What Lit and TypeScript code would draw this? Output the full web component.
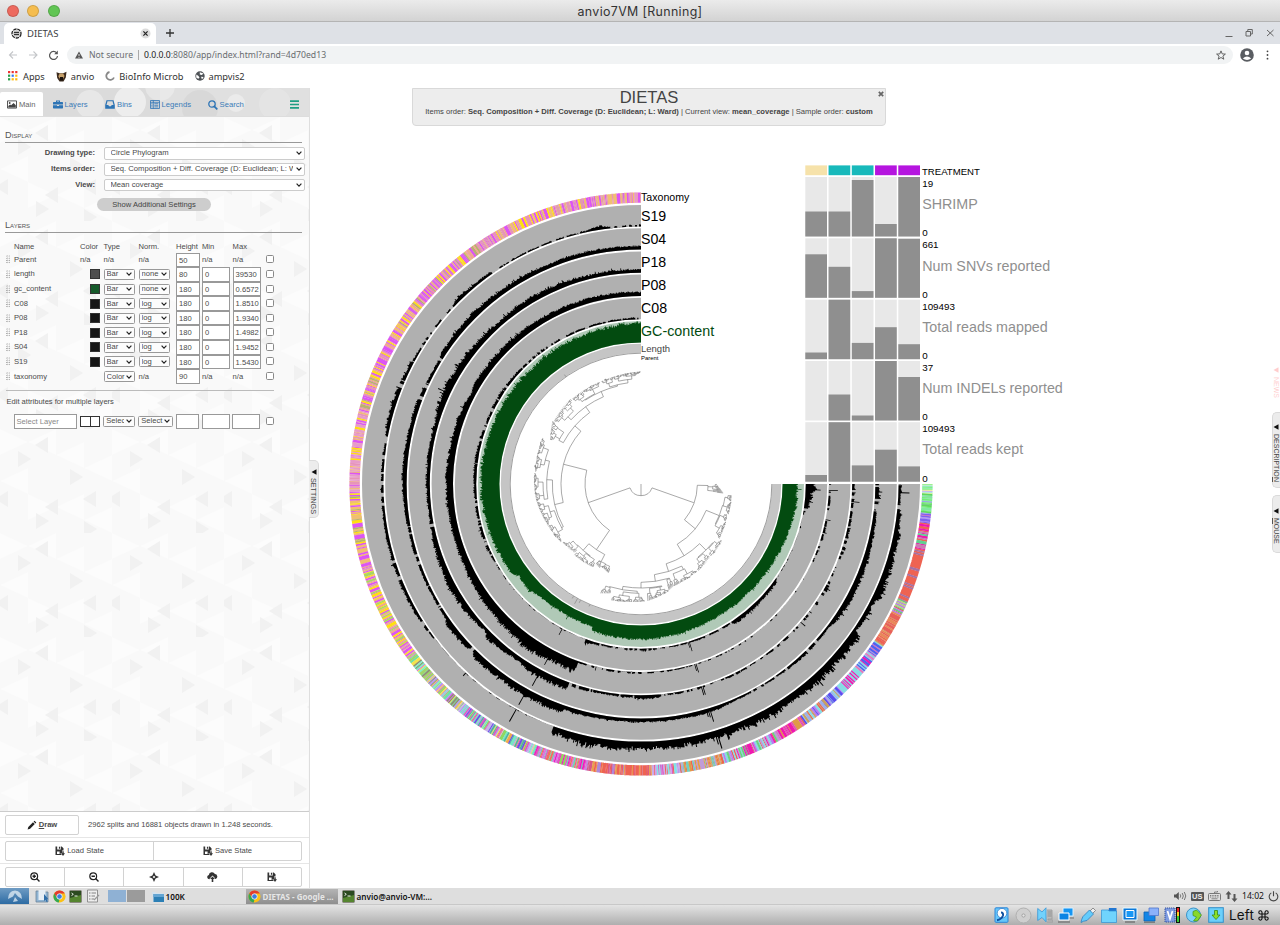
import { LitElement, html, svg, css } from "lit";
import { customElement } from "lit/decorators.js";

const CX = 641;
const CY = 484;

/* Angles run counter-clockwise in degrees, 0 at the top of the circle. */
const pt = (r: number, t: number): string => {
  const a = (t * Math.PI) / 180;
  return `${(CX - r * Math.sin(a)).toFixed(2)} ${(CY - r * Math.cos(a)).toFixed(2)}`;
};

const arc = (r: number, a: number, b: number): string =>
  `M${pt(r, a)}A${r} ${r} 0 ${Math.abs(b - a) > 180 ? 1 : 0} ${b > a ? 0 : 1} ${pt(r, b)}`;

const random = (seed: number) => () => {
  seed = (seed + 0x6d2b79f5) | 0;
  let x = Math.imul(seed ^ (seed >>> 15), 1 | seed);
  x = (x + Math.imul(x ^ (x >>> 7), 61 | x)) ^ x;
  return ((x ^ (x >>> 14)) >>> 0) / 4294967296;
};

type Key = [number, number, number]; // angle, height, density
interface Ring {
  inner: number;
  fill: string;
  back: string;
  jitter: number;
  keys: Key[];
  spikes: [number, number][];
}

const BLACK = "#000";
const GREY = "#b0b0b0";

const rings: Ring[] = [
  {
    inner: 257.6, fill: BLACK, back: GREY, jitter: 0.5,
    keys: [[0, 1.5, 0.5], [7, 1.5, 0.7], [9, 4, 1], [12, 1.5, 0.6], [32, 1.2, 0.6], [36, 2.5, 0.9], [45, 4, 1], [47, 1.5, 0.5], [60, 2, 0.6], [68, 4, 0.9], [76, 4, 1], [80, 2, 0.6], [95, 2.5, 0.7], [102, 3, 0.9], [118, 3, 0.8], [126, 1.5, 0.6], [128, 0.5, 0.15], [159.4, 0.6, 0.15], [159.6, 6, 1], [168, 9, 1], [180, 7, 1], [190, 7.5, 1], [207, 8, 1], [225, 8, 1], [235, 8.5, 1], [235.5, 2.5, 1], [239, 5, 1], [243, 3.5, 1], [244, 7, 1], [250, 6.5, 1], [258, 5.5, 1], [264, 3.5, 1], [266, 2, 0.7], [270, 3, 0.8]],
    spikes: [[151, 14], [196.4, 14], [196.8, 19], [207.2, 11], [195.8, 10], [268, 11], [244.6, 9], [137, 4]],
  },
  {
    inner: 234.4, fill: BLACK, back: GREY, jitter: 0.35,
    keys: [[0, 3.5, 1], [10, 4, 1], [30, 4.5, 1], [45, 5.5, 1], [56, 4.5, 1], [60, 2.5, 0.9], [70, 4, 1], [90, 4.5, 1], [100, 3, 0.9], [112, 2.5, 0.9], [124, 2.5, 0.7], [126, 6, 1], [133, 5, 1], [134.5, 2, 0.9], [136, 7, 1], [145, 6, 1], [152, 7, 1], [160.5, 7.5, 1], [161, 4, 1], [180, 3.7, 1], [199, 4, 1], [202, 2, 0.9], [215, 1.6, 0.8], [225, 3, 0.9], [233, 2, 1], [234, 4, 1], [240, 6, 1], [252, 5, 1], [262, 3.5, 1], [264, 1.5, 0.5], [266, 5, 1], [270, 3, 0.8]],
    spikes: [[151, 18], [196.4, 9], [196.8, 14], [196, 8], [268, 7]],
  },
  {
    inner: 211.2, fill: BLACK, back: GREY, jitter: 0.4,
    keys: [[0, 3, 1], [15, 4.5, 1], [30, 6, 1], [40, 4.5, 1], [50, 6, 1], [60, 7, 1], [66, 8, 1], [73, 4, 1], [90, 3.5, 1], [98, 3, 0.9], [105, 4.5, 1], [120, 7, 1], [130, 5, 1], [133, 3, 1], [135, 7, 1], [145, 4, 1], [150, 7, 1], [159.8, 7, 1], [160.2, 3, 0.9], [170, 2, 0.8], [178, 2.5, 0.7], [179, 4, 1], [184, 3, 1], [186, 1.5, 0.7], [196, 2, 0.7], [200, 1, 0.3], [207, 2, 0.8], [212, 1, 0.3], [225, 2, 0.5], [240, 3, 0.5], [246, 1, 0.3], [252, 3, 0.6], [265, 2, 0.4], [270, 3, 0.6]],
    spikes: [[12, 6], [46, 8], [64.7, 13], [65.3, 10], [63, 9], [151.6, 18], [196.4, 9], [196.8, 9], [229, 6], [240.5, 6], [265, 8]],
  },
  {
    inner: 188, fill: BLACK, back: GREY, jitter: 0.3,
    keys: [[0, 4, 1], [20, 5, 1], [40, 6, 1], [60, 6.5, 1], [62, 4, 1], [66, 6, 1], [90, 7, 1], [105, 6, 1], [115, 7, 1], [130, 9, 1], [140, 10, 1], [146, 13, 1], [153, 10, 1], [160.3, 11.5, 1], [160.5, 1.5, 0.5], [172, 2, 0.5], [195, 1, 0.5], [220, 1.2, 0.3], [240, 0.8, 0.2], [250, 2, 0.5], [270, 2, 0.5]],
    spikes: [[151.8, 17], [196.4, 7], [196.8, 9], [166, 4], [255, 4], [268, 9], [259, 5]],
  },
  {
    inner: 164.8, fill: BLACK, back: GREY, jitter: 0.5,
    keys: [[0, 1.5, 0.8], [25, 1.6, 0.8], [45, 2, 0.8], [58, 3, 0.9], [66, 2, 0.7], [85, 3, 0.9], [95, 2, 0.8], [112, 3, 0.9], [118, 1, 0.5], [130, 0.6, 0.2], [160, 0.6, 0.1], [160.5, 4, 1], [164, 2, 0.9], [167, 1.5, 0.5], [184, 2, 0.7], [188, 1, 0.5], [198, 1.4, 0.8], [213, 1.4, 0.7], [214, 4.5, 1], [225, 3, 1], [234, 3, 1], [235, 0.6, 0.2], [260, 0.8, 0.2], [261, 4, 0.8], [263, 4.5, 1], [267, 7, 1], [268.5, 11, 1], [270, 6, 1]],
    spikes: [[151.4, 7], [196.4, 6], [196.8, 10], [268, 15]],
  },
  {
    inner: 141.6, fill: "#034b10", back: "#b0c9b7", jitter: 0.14,
    keys: [[0, 19, 1], [25, 18, 1], [45, 17.5, 1], [70, 18, 1], [90, 18.5, 1], [110, 17, 1], [125, 15.5, 1], [127, 11, 1], [133, 13, 1], [138, 9.5, 1], [148, 9, 1], [161, 9, 1], [161.5, 13, 1], [175, 14, 1], [195, 13, 1], [210, 11.5, 1], [230, 11.5, 1], [245, 12.5, 1], [262, 15, 1], [270, 15, 1]],
    spikes: [[151, 13], [196.5, 15], [268, 19], [144, 12]],
  },
];

const sample = (keys: Key[], t: number): [number, number] => {
  for (let i = 1; i < keys.length; i++) {
    if (t <= keys[i][0]) {
      const [a, h, d] = keys[i - 1];
      const [b, h2, d2] = keys[i];
      const f = (t - a) / (b - a);
      return [h + (h2 - h) * f, d + (d2 - d) * f];
    }
  }
  const last = keys[keys.length - 1];
  return [last[1], last[2]];
};

const profile = (ring: Ring, seed: number): string => {
  const rnd = random(seed);
  const step = 0.22;
  let d = `M${pt(ring.inner, 0)}`;
  let on = true;
  let left = 0;
  let slow = 1;
  for (let t = 0; t < 270; t += step) {
    const [h, density] = sample(ring.keys, t);
    if (left-- <= 0) {
      on = rnd() < density;
      left = Math.floor(rnd() * 4);
      slow = 1 + (rnd() - 0.5) * ring.jitter * 0.6;
    }
    let v = on ? h * slow * (1 + (rnd() - 0.5) * ring.jitter) : 0;
    if (on && rnd() < 0.07) v *= 1 + ring.jitter * 0.6;
    for (const [a, s] of ring.spikes) if (Math.abs(a - t) <= step * 0.5) v = s;
    v = Math.min(v, 21.2);
    const e = Math.min(t + step, 270);
    d += `L${pt(ring.inner + v, t)}L${pt(ring.inner + v, e)}`;
  }
  d += `L${pt(ring.inner, 270)}A${ring.inner} ${ring.inner} 0 1 1 ${pt(ring.inner, 0)}Z`;
  return d;
};

/* Taxonomy stripes: zone end angle followed by its weighted colours. */
const zones: [number, string[]][] = [
  [12, ["#dc55f4", "#f0bf72", "#f0bf72", "#e29aae", "#dc55f4", "#e795b8"]],
  [34, ["#dc55f4", "#f0bf72", "#e795b8", "#dc55f4", "#ffdf10", "#e795b8", "#e0a0a8"]],
  [75, ["#dc55f4", "#f0bf72", "#e795b8", "#d75ff0", "#ffdf10", "#b8b070", "#f0a890", "#dc55f4"]],
  [92, ["#e795b8", "#f0bf72", "#dc55f4", "#e79cc8", "#ffdf10", "#e79cc8"]],
  [102, ["#f0bf72", "#f0bf72", "#dc55f4", "#b8b070", "#ffdf10"]],
  [107, ["#dc55f4", "#dc55f4", "#f0bf72"]],
  [127, ["#dc55f4", "#f0bf72", "#e795b8", "#dc55f4", "#ffdf10", "#f0bf72", "#a8d860"]],
  [140, ["#6fe0a8", "#b79cf0", "#84eec8", "#a2d468", "#dc55f4", "#f4e24e", "#8f8f70"]],
  [158, ["#76e8c4", "#b79cf0", "#6a50e8", "#e05ac0", "#8fd860", "#f0a850", "#c8b4e8", "#50b0a0", "#e8e070"]],
  [169, ["#e05ac0", "#d878e0", "#6fd0b8", "#8fd860", "#f07060", "#f01cc0"]],
  [182, ["#ee6352", "#ee6352", "#e8a050", "#b088d8", "#d85888"]],
  [188, ["#e05ac0", "#b79cf0", "#84e2e8", "#ee6352", "#c8a8e8"]],
  [196, ["#ee6352", "#e09a48", "#e09a48", "#c09cd8", "#70d0c0"]],
  [208, ["#f018b0", "#88dce4", "#ee6352", "#c09cd8", "#6cd080", "#b87cf0"]],
  [214, ["#f018b0", "#e09a48", "#c09cd8", "#e058b0"]],
  [224, ["#5a4cf0", "#88dce4", "#b87cf0", "#9cb0e8", "#ee6352", "#c8a060"]],
  [229, ["#88dce4", "#88dce4", "#f018b0"]],
  [236, ["#f018b0", "#88dce4", "#c09cd8", "#e870b8", "#5060f0"]],
  [243, ["#ee6352", "#e8885a", "#e8605a", "#d0a060"]],
  [246, ["#ee6352", "#6cc880", "#b87cf0", "#b8d080"]],
  [256.5, ["#ee6352", "#ee6352", "#ee6352", "#ee6352", "#ee6352", "#a870a0"]],
  [262, ["#ee6352", "#f018b0", "#60d090", "#ee6352", "#c87cb0"]],
  [264, ["#b79cf0", "#8060f0", "#d070c0"]],
  [268, ["#70f070", "#80e8a0", "#a09cf0", "#60d860"]],
  [270.1, ["#80f080", "#c8b0f0", "#f0f0a0", "#88e4ec"]],
];

const stripes = (): Map<string, string> => {
  const rnd = random(77);
  const out = new Map<string, string>();
  let z = 0;
  for (let t = 0; t < 269.9; ) {
    while (t >= zones[z][0]) z++;
    const colours = zones[z][1];
    const c = colours[Math.floor(rnd() * colours.length)];
    const e = Math.min(270, t + 0.1 + rnd() * 0.24);
    out.set(c, (out.get(c) ?? "") + `M${pt(281.2, t)}L${pt(291.6, t)}L${pt(291.6, e + 0.05)}L${pt(281.2, e + 0.05)}Z`);
    t = e;
  }
  return out;
};

/* Dendrogram: branch arcs [radius, from, to] and stems [angle, from, to], radii in thirds of a pixel. */
const branches: number[][] = [
  [35, 109.5, 250.5], [168, 75.7, 145.8], [240, 48.7, 103.4], [264, 35.6, 62], [285, 23.3, 47.4], [302, 13.5, 33.5],
  [266, 87.4, 118.8], [283, 76, 99], [238, 138.9, 152.8], [264, 134, 144.7], [262, 151.5, 156], [169, 230.5, 268.7],
  [211, 211, 248], [253, 242, 255.2], [251, 197.5, 224.5], [278, 218, 230.5], [275, 188.4, 206.4], [295, 180, 196.7],
  [312, 170, 191.5], [322, 163, 178],
];
const stems: number[][] = [
  [180, 0, 35], [109.5, 35, 168], [250.5, 35, 168], [75.7, 168, 240], [48.7, 240, 264], [35.6, 264, 285],
  [23.3, 285, 302], [103.4, 240, 266], [87.4, 266, 283], [145.8, 168, 238], [138.9, 238, 264], [152.8, 238, 262],
  [230.5, 169, 211], [248, 211, 253], [211, 211, 251], [224.5, 251, 278], [197.5, 251, 275], [188.4, 275, 295],
  [180, 295, 312], [170, 312, 322],
];
/* Leaf groups: stem angle, stem radius, first and last leaf angle, leaf radius at each end. */
const groups: number[][] = [
  [13.5, 302, 0, 21, 337, 330], [33.5, 302, 22, 39, 330, 328], [47.4, 285, 39.5, 54, 331, 322], [62, 264, 54.5, 64, 326, 303],
  [76, 283, 65, 83.5, 326, 320], [99, 283, 84, 99.5, 322, 318], [118.8, 266, 100, 126, 317, 296],
  [134, 264, 126.5, 136, 293, 286], [144.7, 264, 136.5, 150, 292, 288], [151.5, 262, 150.5, 154, 275, 281], [156, 262, 154, 160, 272, 284],
  [268.7, 169, 263.5, 270, 249, 225], [255.2, 253, 251, 263, 278, 274], [242, 253, 235, 250.5, 287, 274],
  [230.5, 278, 224, 235, 302, 296], [218, 278, 213.5, 223.5, 312, 300], [206.4, 275, 198, 213, 322, 310],
  [191.5, 312, 183, 194.5, 352, 332], [196.7, 295, 194.5, 198, 330, 320], [163, 322, 159.5, 164.5, 350, 340], [178, 322, 165.5, 182, 360, 352],
];

const tree = (): string => {
  const rnd = random(9);
  let d = "";
  for (const [r, a, b] of branches) d += arc(r / 3, a, b);
  for (const [t, a, b] of stems) d += `M${pt(a / 3, t)}L${pt(b / 3, t)}`;
  const grow = (t: number, r: number, a: number, b: number, ra: number, rb: number, root = false): void => {
    const end = (ra + rb) / 2;
    if (b - a < 0.95) {
      d += `M${pt(r / 3, t)}L${pt(end / 3, t)}`;
      return;
    }
    let next = r + Math.max(1.2, (end - r) * (0.3 + rnd() * 0.3));
    if (root) next = Math.max(r + 2, Math.min(ra, rb) - 24);
    const s = a + (b - a) * (0.22 + rnd() * 0.56);
    const rs = ra + ((rb - ra) * (s - a)) / (b - a);
    const l = (a + s) / 2;
    const m = (s + b) / 2;
    d += `M${pt(r / 3, t)}L${pt(next / 3, t)}` + arc(next / 3, Math.min(l, t), Math.max(m, t));
    grow(l, next, a, s, ra, rs);
    grow(m, next, s, b, rs, rb);
  };
  for (const [t, r, a, b, ra, rb] of groups) grow(t, r, a, b, ra, rb, true);
  return d;
};

const ringLabels: [string, number, number, string][] = [
  ["Taxonomy", 201, 10.6, "#000"], ["S19", 220.6, 14.2, "#000"], ["S04", 243.6, 14.2, "#000"], ["P18", 266.8, 14.2, "#000"],
  ["P08", 290.2, 14.2, "#000"], ["C08", 313.4, 14.2, "#000"], ["GC-content", 336.4, 14.3, "#034b10"], ["Length", 352.3, 9.5, "#444"], ["Parent", 360.3, 5.9, "#000"],
];

const samples: [string, string, number, number[]][] = [
  ["SHRIMP", "19", 177, [25, 25, 56.5, 12.5, 59.5]],
  ["Num SNVs reported", "661", 238.3, [43.5, 31, 6.7, 59.5, 59]],
  ["Total reads mapped", "109493", 299.7, [6.7, 59.5, 16.3, 32, 15]],
  ["Num INDELs reported", "37", 361, [0, 26, 5, 59.5, 43.5]],
  ["Total reads kept", "109493", 422.2, [6.7, 59.5, 16.3, 32, 15.3]],
];
const colX = (i: number) => 805.3 + i * 23.25;

@customElement("phylo-canvas")
export class PhyloCanvas extends LitElement {
  static styles = css`
    :host { display: block; }
    svg { display: block; font-family: "Liberation Sans", Arial, sans-serif; }
  `;
  render() {
    return html`<svg width="970" height="800" viewBox="310 88 970 800">
      ${[...stripes()].map(([c, d]) => svg`<path d=${d} fill=${c} />`)}
      ${rings.map((r, i) => svg`
        <path d=${arc(r.inner + 10.7, 0, 270)} fill="none" stroke=${r.back} stroke-width="21.4" />
        <path d=${profile(r, 100 + i)} fill=${r.fill} />`)}
      <path d=${arc(135.7, 0, 270)} fill="none" stroke="#c5c5c5" stroke-width="9" />
      <path d=${arc(130.8, 0, 270)} fill="none" stroke="#777" stroke-width="0.7" />
      <path d=${`M${pt(131, 151)}L${pt(137, 151)}M${pt(131, 152.5)}L${pt(134, 152.5)}M${pt(131, 149)}L${pt(133.5, 149)}M${pt(131, 157)}L${pt(133, 157)}M${pt(131, 35)}L${pt(133.5, 35)}`} stroke="#555" stroke-width="0.4" />
      <path d=${tree()} fill="none" stroke="#6f6f6f" stroke-width="0.6" />
      ${ringLabels.map(([s, y, size, c]) => svg`<text x="641" y=${y} font-size=${size} fill=${c}>${s}</text>`)}
      ${["#f6e2aa", "#18b9bb", "#18b9bb", "#b515df", "#b515df"].map((c, i) => svg`<rect x=${colX(i)} y="165.4" width="21.7" height="9.8" fill=${c} />`)}
      <text x="922" y="174.8" font-size="9.6">TREATMENT</text>
      ${samples.map(([name, max, y, bars]) => svg`
        ${bars.map((h, i) => svg`<rect x=${colX(i)} y=${y} width="21.7" height="59.5" fill="#e8e8e8" /><rect x=${colX(i)} y=${y + 59.5 - h} width="21.7" height=${h} fill="#8f8f8f" />`)}
        <text x="922.2" y=${y + 10} font-size="9.8">${max}</text>
        <text x="922.2" y=${y + 59.4} font-size="9.8">0</text>
        <text x="922.2" y=${y + 32.2} font-size="14.3" fill="#8f8f8f">${name}</text>`)}
    </svg>`;
  }
}

const chevron = html`<svg class="chev" width="6" height="4" viewBox="0 0 6 4"><path d="M.6.7 3 3.1 5.4.7" fill="none" stroke="#222" stroke-width="1.2" /></svg>`;
const floppy = (s: number) => html`<svg width=${s} height=${s} viewBox="0 0 10 10"><path fill="#333" fill-rule="evenodd" d="M.5.5h1.7v3h3.6v-3h.9l1.8 1.7v2.3H7V7H5.3l1.5 2H.5zM2 5.6V8h2.6V5.600zM3.900.7h1.200v2.100H3.900z" /><path fill="#333" d="M7.300 5.200h1.400v2.100H10L8 9.900 6 7.300h1.300z" /></svg>`;

interface Layer { name: string; color?: string; type?: string; norm?: string; height: string; min?: string; max?: string; }
const layers: Layer[] = [
  { name: "Parent", height: "50" },
  { name: "length", color: "#4f4f4f", type: "Bar", norm: "none", height: "80", min: "0", max: "39530" },
  { name: "gc_content", color: "#15592a", type: "Bar", norm: "none", height: "180", min: "0", max: "0.6572" },
  ...([["C08", "1.8510"], ["P08", "1.9340"], ["P18", "1.4982"], ["S04", "1.9452"], ["S19", "1.5430"]].map(([name, max]) => ({
    name, color: "#161616", type: "Bar", norm: "log", height: "180", min: "0", max,
  }))),
  { name: "taxonomy", type: "Color", height: "90" },
];

@customElement("settings-panel")
export class SettingsPanel extends LitElement {
  static styles = css`
    :host { display: flex; flex-direction: column; width: 310px; height: 800px; box-sizing: border-box; border-right: 1px solid #dedede; font: 7.6px/10px "Liberation Sans", Arial, sans-serif; color: #4a4a4a; background: #fff; }
    .tabs { position: relative; height: 29px; box-sizing: border-box; border-bottom: 1px solid #ddd; padding-top: 4px; display: flex; background: #e0e0e0; color: #3b7cb8; overflow: hidden; flex: none; }
    .bokeh { position: absolute; inset: 0; }
    .tab { position: relative; display: flex; align-items: center; gap: 2px; height: 25px; box-sizing: border-box; }
    .tab.main { width: 43px; background: #fff; color: #666; padding-left: 7px; border-radius: 2px 2px 0 0; margin-right: 9.5px; }
    .layers { width: 52.5px; } .bins { width: 44.5px; } .legends { width: 58px; } .search { width: 82.5px; }
    .layers, .bins, .legends, .search { font-size: 7.7px; }
    .body { position: relative; flex: 1; overflow: hidden; }
    .weave { position: absolute; inset: 0; }
    .content { position: relative; padding: 14px 6px 0; }
    .heading { font-size: 9.2px; font-variant: small-caps; line-height: 9px; height: 11px; border-bottom: 1px solid #999; width: 297px; color: #555; margin-left: -1px; }
    .form { display: grid; grid-template-columns: 89px 201px; column-gap: 9px; row-gap: 4px; margin-top: 4px; }
    .label { text-align: right; font-weight: bold; line-height: 11px; font-size: 7.6px; }
    .select { display: flex; align-items: center; justify-content: space-between; box-sizing: border-box; border: 1px solid #ccc; border-radius: 2px; background: #fff; height: 12.6px; margin-bottom: -.7px; padding: 0 2px 0 5.5px; white-space: nowrap; overflow: hidden; }
    .select span { overflow: hidden; width: 182px; font-size: 7.65px; }
    .more { width: 114px; height: 13.4px; margin: 7.2px 0 0 91px; border-radius: 7px; background: #cdcdcd; text-align: center; line-height: 13px; color: #444; }
    .heading.second { margin-top: 9.3px; }
    .table { margin-top: 7.8px; }
    .row { display: grid; grid-template-columns: 8px 66px 23.5px 35px 37.5px 26px 30.6px 33.4px 10px; align-items: center; height: 14.58px; }
    .row.head { height: 12.2px; box-sizing: border-box; padding-top: 2px; }
    .grip { width: 4px; height: 9px; background: radial-gradient(circle at 1px 1px, #aaa .6px, transparent .8px) 0 0 / 2.6px 2.2px; }
    .sw { width: 9.8px; height: 10px; box-sizing: border-box; border: 1px solid #333; margin-left: 10px; }
    .mini { display: flex; align-items: center; justify-content: space-between; width: 31.4px; height: 11px; box-sizing: border-box; border: .8px solid #999; border-radius: 1.5px; background: #fcfcfc; padding: 0 2px; overflow: hidden; }
    .mini span { width: 18px; overflow: hidden; white-space: nowrap; }
    .chev { flex: none; }
    .inp { box-sizing: border-box; height: 14.6px; border: 1px solid #999; background: #fff; padding-left: 2px; line-height: 13px; overflow: hidden; white-space: nowrap; }
    .h { width: 23.6px; } .m { width: 28px; }
    .cb { width: 8px; height: 8px; box-sizing: border-box; border: 1px solid #8a8a8a; border-radius: 1.6px; background: #fff; margin-top: -1px; }
    .rule { border-top: 1px solid #bbb; width: 268px; margin: 6px 0 6.5px; }
    .edit { font-size: 7.55px; margin-left: .5px; }
    .multi { display: flex; align-items: center; margin: 6.7px 0 0 7.5px; height: 15px; }
    .pick { width: 63.5px; color: #888; margin-right: 2.6px; }
    .pair { width: 20.6px; height: 11px; border: 1px solid #333; box-sizing: border-box; background: linear-gradient(90deg, #fff 9px, #333 9px, #333 10px, #fff 10px); margin-right: 3px; }
    .typ { width: 35px; } .nrm { width: 37.5px; } .hgt { width: 26px; } .mn { width: 30.6px; } .mx { width: 33.4px; }
    .nrm .mini { width: 35px; } .nrm .mini span { width: 24px; }
    .foot { flex: none; height: 77px; box-sizing: border-box; border-top: 1px solid #ccc; padding: 3px 5px 0; background: #fff; position: relative; }
    .btns { display: flex; width: 297px; height: 20px; box-sizing: border-box; border: 1px solid #d2d2d2; border-radius: 2px; }
    .btns > div { flex: 1; display: flex; align-items: center; justify-content: center; gap: 2px; }
    .btns > div + div { border-left: 1px solid #d2d2d2; }
    .drawrow { display: flex; align-items: center; gap: 9px; }
    .drawrow .btns { width: 74px; font-weight: bold; }
    .line { height: 6px; margin: 0 -5px; background: linear-gradient(#fff 2px, #e6e6e6 2px, #e6e6e6 3px, #fff 3px); }
  `;
  private sel(t: string) { return html`<div class="mini"><span>${t}</span>${chevron}</div>`; }
  render() {
    const tri = [[18, 22, 1], [48, 8, 0], [70, 40, 1], [8, 62, 0], [96, 62, 0], [36, 84, 1], [84, 92, 1], [58, 70, 0]];
    return html`
      <div class="tabs">
        <svg class="bokeh" width="309" height="29">
          <rect x="40" width="120" height="29" fill="#d6d6d6" opacity=".5" /><circle cx="90" cy="16" r="14" fill="#fff" opacity=".35" /><circle cx="130" cy="14" r="16" fill="#fff" opacity=".5" />
          <circle cx="160" cy="-2" r="15" fill="#fff" opacity=".3" /><circle cx="236" cy="15" r="9" fill="#fff" opacity=".35" /><circle cx="200" cy="20" r="18" fill="#ccc" opacity=".4" /><circle cx="275" cy="16" r="16" fill="#fff" opacity=".15" />
        </svg>
        <div class="tab main"><svg width="10" height="9" viewBox="0 0 10 9"><path d="M.5.9h9v7.2h-9z" fill="none" stroke="#444" stroke-width=".9" /><circle cx="2.7" cy="3" r=".9" fill="#444" /><path d="M1.3 7.4V6l1.8-1.6 1 .9L6.6 3l2.2 2.3v2.1z" fill="#444" /></svg>Main</div>
        <div class="tab layers"><svg width="10" height="9" viewBox="0 0 10 9"><path fill="#2d74b5" fill-rule="evenodd" d="M3 2V.6h4V2h2.4l.6.6v2H0v-2L.6 2zM4 1.4V2h2v-.6zM0 5.2h4v.8h2v-.8h4V8l-.5.6H.5L0 8z" /></svg>Layers</div>
        <div class="tab bins"><svg width="10" height="9" viewBox="0 0 10 9"><path fill="#2d74b5" fill-rule="evenodd" d="M1.5.2h7L9.8 5v3.8H.2V5zM2.5 1.3 1.5 5h1.8l.7 1.3h2L6.7 5h1.8l-1-3.7z" /></svg>Bins</div>
        <div class="tab legends"><svg width="10" height="9" viewBox="0 0 10 9"><path d="M.5.5h9v8h-9zM.5 2.3h9M3.3 .5v8M4.3 3.7h4M4.3 5.3h4M4.3 6.9h4M1.3 3.7h1.2M1.3 5.3h1.2M1.3 6.9h1.2" fill="none" stroke="#2d74b5" stroke-width=".8" /></svg>Legends</div>
        <div class="tab search"><svg width="10" height="10" viewBox="0 0 10 10"><circle cx="4" cy="4" r="3.2" fill="none" stroke="#2d74b5" stroke-width="1.3" /><path d="M6.3 6.3 9.3 9.3" stroke="#2d74b5" stroke-width="1.7" /></svg>Search</div>
        <div class="tab"><svg width="9" height="9" viewBox="0 0 9 9"><path d="M0 1.2h9M0 4.5h9M0 7.8h9" stroke="#1f9d83" stroke-width="1.7" /></svg></div>
      </div>
      <div class="body">
        <svg class="weave" width="309" height="694">
          <defs><pattern id="w" width="112" height="104" patternUnits="userSpaceOnUse">
            <rect width="112" height="104" fill="#f9f9f9" />
            <path d="M0 0 28 13 0 26M28 13 56 0 56 26ZM56 26 84 13 84 39ZM84 39 112 52 112 26M0 52 28 39 28 65ZM28 65 56 78 28 91ZM56 78 84 65 84 91ZM84 91 112 104 112 78" fill="#fcfcfc" />
            ${tri.map(([x, y, dir]) => svg`<path d=${dir ? `M${x} ${y}l13 8-13 8z` : `M${x} ${y}l-13 8 13 8z`} fill="#f1f1f1" />`)}
          </pattern></defs>
          <rect width="309" height="694" fill="url(#w)" />
        </svg>
        <div class="content">
          <div class="heading">Display</div>
          <div class="form">
            <div class="label">Drawing type:</div><div class="select"><span>Circle Phylogram</span>${chevron}</div>
            <div class="label">Items order:</div><div class="select"><span>Seq. Composition + Diff. Coverage (D: Euclidean; L: Ward)</span>${chevron}</div>
            <div class="label">View:</div><div class="select"><span>Mean coverage</span>${chevron}</div>
          </div>
          <div class="more">Show Additional Settings</div>
          <div class="heading second">Layers</div>
          <div class="table">
            <div class="row head"><i></i><span>Name</span><span>Color</span><span>Type</span><span>Norm.</span><span>Height</span><span>Min</span><span>Max</span></div>
            ${layers.map((l) => html`<div class="row">
              <div class="grip"></div><span>${l.name}</span>
              ${l.color ? html`<div class="sw" style="background:${l.color}"></div>` : html`<span>${l.type ? "" : "n/a"}</span>`}
              ${l.type ? this.sel(l.type) : html`<span>n/a</span>`}
              ${l.norm ? this.sel(l.norm) : html`<span>n/a</span>`}
              <div class="inp h">${l.height}</div>
              ${l.min ? html`<div class="inp m">${l.min}</div><div class="inp m">${l.max}</div>` : html`<span>n/a</span><span>n/a</span>`}
              <div class="cb"></div>
            </div>`)}
          </div>
          <div class="rule"></div>
          <div class="edit">Edit attributes for multiple layers</div>
          <div class="multi">
            <div class="inp pick">Select Layer</div><div class="pair"></div>
            <div class="typ">${this.sel("Select")}</div><div class="nrm">${this.sel("Select")}</div>
            <div class="hgt"><div class="inp h"></div></div><div class="mn"><div class="inp m"></div></div><div class="mx"><div class="inp m"></div></div><div class="cb"></div>
          </div>
        </div>
      </div>
      <div class="foot">
        <div class="drawrow"><div class="btns"><div><svg width="10" height="10" viewBox="0 0 10 10"><path fill="#222" d="M.6 9.4 1.3 6.9 6 2.2 7.8 4 3.1 8.7zM6.6 1.6l.9-.9 1.8 1.8-.9.9z" /></svg><span><u>D</u>raw</span></div></div><span>2962 splits and 16881 objects drawn in 1.248 seconds.</span></div>
        <div class="line"></div>
        <div class="btns"><div>${floppy(10)}Load State</div><div>${floppy(10)}Save State</div></div>
        <div class="line"></div>
        <div class="btns">
          <div><svg width="10" height="10" viewBox="0 0 10 10"><circle cx="4.2" cy="4.2" r="3.4" fill="none" stroke="#222" stroke-width="1.2" /><path d="M2.5 4.2h3.4M4.2 2.5v3.4M6.6 6.6 9.5 9.5" stroke="#222" stroke-width="1.4" /></svg></div>
          <div><svg width="10" height="10" viewBox="0 0 10 10"><circle cx="4.2" cy="4.2" r="3.4" fill="none" stroke="#222" stroke-width="1.2" /><path d="M2.5 4.2h3.4M6.6 6.6 9.5 9.5" stroke="#222" stroke-width="1.4" /></svg></div>
          <div><svg width="10" height="10" viewBox="0 0 10 10"><path fill="#333" fill-rule="evenodd" d="M5 0 6.6 3.4 10 5 6.6 6.6 5 10 3.4 6.6 0 5 3.4 3.4zM5 3.7 3.7 5 5 6.3 6.3 5z" /></svg></div>
          <div><svg width="11" height="10" viewBox="0 0 11 10"><path fill="#333" d="M2.6 7.2A2.2 2.2 0 0 1 1.8 2.9 3.2 3.2 0 0 1 7.9 2.1 2.6 2.6 0 0 1 8.7 7.1H7.6L8.3 6.4 5.5 3.6 2.7 6.4zM5.5 4.6 7.9 7.1H6.3v2.8H4.7V7.1H3.1z" /></svg></div>
          <div>${floppy(10)}</div>
        </div>
      </div>`;
  }
}

@customElement("app-root")
export class AppRoot extends LitElement {
  static styles = css`
    :host { display: flex; flex-direction: column; width: 1280px; height: 925px; overflow: hidden; background: #fff; font-family: "Noto Sans", sans-serif; }
    .title { flex: none; position: relative; height: 22px; box-sizing: border-box; border-bottom: 1px solid #b4b4b4; background: linear-gradient(#ebebeb, #d3d3d3); display: flex; align-items: center; justify-content: center; font: 12.4px "Inter", "Liberation Sans", sans-serif; letter-spacing: .35px; color: #333; padding-top: 1px; }
    .lights { position: absolute; left: 7px; top: 5px; display: flex; gap: 8.3px; }
    .lights i { width: 12px; height: 12px; border-radius: 50%; box-sizing: border-box; border: .5px solid rgba(0, 0, 0, .15); }
    .r { background: #ed6a5f; } .y { background: #f5bd4f; } .g { background: #61c554; }
    .strip { flex: none; height: 22px; background: #dee1e6; display: flex; align-items: flex-end; font-size: 9.5px; color: #3c4043; }
    .ctab { margin-left: 4px; width: 152px; height: 21px; box-sizing: border-box; background: #fff; border-radius: 5px 5px 0 0; display: flex; align-items: center; padding: 0 5px 1px 7px; gap: 5px; }
    .ctab span { flex: 1; }
    .plus { margin: 0 0 7px 10px; }
    .win { margin: 0 6px 5px auto; }
    .bar { flex: none; height: 22px; display: flex; align-items: center; font-size: 8.66px; color: #6a6d70; padding-left: 8px; }
    .omni { margin-left: 8px; width: 1166px; height: 18px; border-radius: 9px; background: #f1f3f4; display: flex; align-items: center; box-sizing: border-box; padding: 0 7px 0 8px; }
    .omni .sep { width: 1px; height: 10px; background: #aaa; margin: 0 5px; }
    .omni b { font-weight: normal; color: #222; }
    .omni .url { flex: 1; }
    .warn { margin-right: 6px; }
    .right { margin-left: 7px; }
    .marks { flex: none; height: 22px; display: flex; align-items: center; padding-left: 8px; font-size: 9.25px; color: #333; box-sizing: border-box; padding-bottom: 2px; }
    .marks div { display: flex; align-items: center; gap: 4px; margin-right: 11px; }
    .marks div:first-child { gap: 5px; }
    .page { position: relative; height: 800px; flex: none; display: flex; }
    .info { position: absolute; left: 412px; top: 0; width: 474px; height: 38px; box-sizing: border-box; background: #ededed; border: 1px solid #d9d9d9; border-radius: 0 0 4px 4px; text-align: center; font-family: "Liberation Sans", Arial, sans-serif; color: #444; }
    .info .name { font-size: 16.6px; line-height: 18px; }
    .info .desc { font-size: 7.62px; line-height: 10px; white-space: nowrap; padding-top: .4px; }
    .x { position: absolute; right: 1.5px; top: 1.5px; }
    .handle { position: absolute; box-sizing: border-box; background: #ececec; border: 1px solid #dadada; font: 7px/7px "Liberation Sans", Arial, sans-serif; color: #444; writing-mode: vertical-rl; display: flex; align-items: center; gap: 4px; padding-top: 8px; white-space: nowrap; }
    .handle u { text-decoration: none; border-left: .6px solid #555; }
    .left { left: 309px; top: 372px; width: 10px; height: 58px; border-radius: 0 5px 5px 0; border-left: 0; font-size: 7.2px; gap: 3px; }
    .hr { right: 0; width: 8.5px; border-radius: 5px 0 0 5px; border-right: 0; }
    .news { top: 270px; height: 56px; opacity: .22; color: #f22; background: #fff; border-color: #fff; }
    .descr { top: 324px; height: 76px; padding-top: 11px; }
    .mouse { top: 407px; height: 58px; padding-top: 12px; }
    .handle svg { flex: none; }
    .task { flex: none; height: 16px; background: #dedede; display: flex; align-items: center; font-size: 8.2px; color: #111; }
    .menu { width: 29px; height: 16px; background: linear-gradient(#6f9cc4, #2d6ba3); display: flex; align-items: center; justify-content: center; margin-right: 6px; }
    .quick { display: flex; gap: 3.7px; align-items: center; margin-right: 7.5px; }
    .desk { width: 18px; height: 12px; background: #8fb1d4; margin-right: 1px; } .desk.two { background: #9b9b9b; margin-right: 7px; }
    .app { display: flex; align-items: center; gap: 2px; height: 15px; font-weight: 600; }
    .app.k { width: 94px; } .app.c { width: 90px; background: linear-gradient(#b4b4b4, #8f8f8f); color: #e6e6e6; padding-left: 2px; font-weight: 700; margin-right: 4px; white-space: nowrap; font-size: 8px; }
    .tray { margin-left: auto; display: flex; align-items: center; gap: 4px; padding-right: 1px; font-size: 8.6px; }
    .kb { background: #555; color: #eee; font: bold 7.5px/9px "Liberation Sans", sans-serif; padding: 0 1.5px; border-radius: 1px; }
    .vm { flex: none; height: 21px; box-sizing: border-box; border-top: 1px solid #c8c8c8; background: linear-gradient(#e4e4e4, #aeaeae); display: flex; justify-content: flex-end; align-items: center; gap: 5.2px; padding-right: 11px; }
    .vm span { font: 13.4px "Inter", "Liberation Sans", sans-serif; color: #111; display: flex; align-items: center; gap: 4px; letter-spacing: .2px; }
  `;
  render() {
    const tri = (c: string) => html`<svg width="6" height="6" viewBox="0 0 6 6"><path d="M5.5 .3v5.4L.5 3z" fill=${c} /></svg>`;
    const chromeLogo = html`<svg width="13" height="13" viewBox="0 0 12 12"><circle cx="6" cy="6" r="5.6" fill="#fbc116" /><path d="M6 .4A5.6 5.6 0 0 1 10.9 3.3H6L3.7 7.3 1.2 3.2A5.6 5.6 0 0 1 6 .4z" fill="#e33b2e" /><path d="M1.2 3.2 3.7 7.4 6 8.7 5.3 11.6A5.6 5.6 0 0 1 1.2 3.2z" fill="#34a853" /><circle cx="6" cy="6" r="2.5" fill="#3a7de0" stroke="#fff" stroke-width=".7" /></svg>`;
    const term = html`<svg width="13" height="13" viewBox="0 0 13 13"><rect x=".5" y=".5" width="12" height="12" rx="1" fill="#2c4a20" stroke="#8a8a80" /><path d="M1 8 12 5v7H1z" fill="#55852f" /><path d="m2.5 3 1.8 1.3L2.5 5.6M5.5 6h3" fill="none" stroke="#fff" stroke-width=".9" /></svg>`;
    return html`
      <div class="title"><div class="lights"><i class="r"></i><i class="y"></i><i class="g"></i></div>anvio7VM [Running]</div>
      <div class="strip">
        <div class="ctab"><svg width="11" height="11" viewBox="0 0 11 11"><circle cx="5.5" cy="5.5" r="4.5" fill="none" stroke="#222" stroke-width="1.3" stroke-dasharray="3.5 .8" /><circle cx="5.5" cy="5.5" r="3.2" fill="#bbb" /><path d="M3 4.5h5M3 6.5h5" stroke="#222" stroke-width=".9" /></svg><span>DIETAS</span>
          <svg width="11" height="11" viewBox="0 0 11 11"><circle cx="5.5" cy="5.5" r="5" fill="#dcdcdc" /><path d="m3.4 3.4 4.2 4.2M7.6 3.4 3.4 7.6" stroke="#222" stroke-width="1.2" /></svg></div>
        <svg class="plus" width="8" height="8" viewBox="0 0 8 8"><path d="M4 0v8M0 4h8" stroke="#333" stroke-width="1.3" /></svg>
        <svg class="win" width="50" height="12" viewBox="0 0 50 12"><path d="M1.5 9.5h7M22 4.5h4.5V9H22zM23.8 4.3V2.5h4.5V7h-1.6M43 3l6.5 6M49.5 3 43 9" fill="none" stroke="#666" stroke-width="1" /></svg>
      </div>
      <div class="bar">
        <svg width="51" height="12" viewBox="0 0 51 12"><path d="M9 6H1.5M5 2.5 1.5 6 5 9.5M21 6h8M25.5 2.5 29 6l-3.5 3.5" fill="none" stroke="#c4c6c9" stroke-width="1.1" /><path d="M48.7 4A4 4 0 1 0 49.5 7" fill="none" stroke="#555" stroke-width="1.2" /><path d="M49.8 1.6v3.6h-3.6z" fill="#555" /></svg>
        <div class="omni"><svg class="warn" width="8" height="8" viewBox="0 0 8 8"><path d="M4 .4 8 7.6H0z" fill="#555" /><path d="M4 3v2.2M4 6v.9" stroke="#fff" stroke-width=".8" /></svg>Not secure<i class="sep"></i><span class="url"><b>0.0.0.0</b>:8080/app/index.html?rand=4d70ed13</span>
          <svg width="10" height="10" viewBox="0 0 10 10"><path d="M5 .9 6.2 3.9l3.2.2-2.5 2 .9 3.1L5 7.5 2.2 9.2l.9-3.1-2.5-2 3.2-.2z" fill="none" stroke="#555" stroke-width=".9" /></svg></div>
        <svg class="right" width="31" height="14" viewBox="0 0 31 14"><circle cx="7" cy="7" r="6.8" fill="#5a5d62" /><circle cx="7" cy="5" r="2.3" fill="#fff" /><path d="M2.8 10.6Q7 6.5 11.2 10.6 7 13.5 2.8 10.6z" fill="#fff" /><g fill="#444"><circle cx="27.5" cy="3.3" r=".9" /><circle cx="27.5" cy="7" r=".9" /><circle cx="27.5" cy="10.7" r=".9" /></g></svg>
      </div>
      <div class="marks">
        <div><svg width="10" height="10" viewBox="0 0 10 10">${["#e33", "#e33", "#e33", "#2a9d4a", "#37e", "#fb1", "#2a9d4a", "#fb1", "#fb1"].map((c, i) => svg`<rect x=${(i % 3) * 3.6} y=${Math.floor(i / 3) * 3.6} width="2.2" height="2.2" fill=${c} />`)}</svg>Apps</div>
        <div><svg width="11" height="11" viewBox="0 0 11 11"><path d="M.5 1.2 3.5 2.3h3.7L10.5.8 9.8 6.5 7.5 10.5h-4L1.2 7z" fill="#3d2c1f" /><path d="M3.7 2.6h3.5L8.5 5 7.3 7.5H3.7L2.3 5.2z" fill="#c8a26b" /><path d="M4 6h3v3.5H4z" fill="#1b120d" /></svg>anvio</div>
        <div><svg width="10" height="10" viewBox="0 0 10 10"><path d="M4.5 1A4 4 0 1 0 9 6.5" fill="none" stroke="#888" stroke-width="1.8" /></svg>BioInfo Microb</div>
        <div><svg width="10" height="10" viewBox="0 0 10 10"><circle cx="5" cy="5" r="4.7" fill="#4f5357" /><path d="M1.3 3.5 3.5 5l1 1.8-1.3 1L1.2 6.5zM4.8 1.2 8.5 2.5 6.8 4 4.8 3.5zM6 5.8l2.6.2L7 8.5z" fill="#fff" /></svg>ampvis2</div>
      </div>
      <div class="page">
        <settings-panel></settings-panel>
        <phylo-canvas></phylo-canvas>
        <div class="info"><div class="name">DIETAS</div><div class="desc">Items order: <b>Seq. Composition + Diff. Coverage (D: Euclidean; L: Ward)</b> | Current view: <b>mean_coverage</b> | Sample order: <b>custom</b></div>
          <svg class="x" width="6" height="6" viewBox="0 0 6 6"><path d="m.8.8 4.4 4.4M5.2.8.8 5.2" stroke="#666" stroke-width="1.7" /></svg></div>
        <div class="handle left">${tri("#111")}<span>SETTINGS</span></div>
        <div class="handle hr news">${tri("#f22")}<span>NEWS</span></div>
        <div class="handle hr descr">${tri("#111")}<span>DESCRIPTIO<u>N</u></span></div>
        <div class="handle hr mouse">${tri("#111")}<span><u>M</u>OUSE</span></div>
      </div>
      <div class="task">
        <div class="menu"><svg width="16" height="14" viewBox="0 0 16 14"><path d="M1 10Q1 2 8 1.5 15 2 15 10L11 7.5 8 4 6 7.5zM6 13l2-5 3 4z" fill="#e3edf6" opacity=".75" /></svg></div>
        <div class="quick">
          <svg width="14" height="14" viewBox="0 0 14 14"><path d="M1 2h4l1 1h7v10H1z" fill="#8fb4d3" stroke="#6d879c" stroke-width=".8" /><path d="M3.5 1h7v10h-7z" fill="#e6eef5" /><path d="M9 5v7l1.5-1.3 1 2.3 1.2-.5-1-2.2h1.8z" fill="#2f6da8" /></svg>
          ${chromeLogo} ${term}
          <svg width="14" height="14" viewBox="0 0 14 14"><path d="M1.5 1h10v12h-10z" fill="#eee" stroke="#888" stroke-width=".9" /><path d="M3 4h1.5M5.5 4H10M3 7h1.5M5.5 7H9M3 10h1.5M5.5 10H8" stroke="#777" stroke-width=".9" /><path d="m8 11 5-5" stroke="#999" stroke-width="1.3" /></svg>
        </div>
        <i class="desk"></i><i class="desk two"></i>
        <div class="app k"><svg width="12" height="11" viewBox="0 0 12 11"><path d="M0 1h3.5l1 1H11v9H1z" fill="#d4e2ee" /><path d="M1.5 3H12v8H1.5z" fill="#2c7fb5" /><path d="M1.5 3H12v3H1.5z" fill="#64a5d2" /></svg>100K</div>
        <div class="app c">${chromeLogo}DIETAS - Google ...</div>
        <div class="app">${term}anvio@anvio-VM:...</div>
        <div class="tray">
          <svg width="13" height="10" viewBox="0 0 13 10"><path d="M0 3.5h2L4.8 1v8L2 6.5H0z" fill="#555" /><path d="M6.2 3.3q1.2 1.7 0 3.4M8.2 2q2.3 3 0 6M10.3 1q3 4 0 8" fill="none" stroke="#777" stroke-width="1" /></svg>
          <span class="kb">US</span>
          <svg width="13" height="10" viewBox="0 0 13 10"><rect x=".5" y="2.5" width="12" height="7" rx="1" fill="none" stroke="#777" /><path d="M2 4.5h9M2 6h9" stroke="#777" stroke-dasharray="1 .7" /><path d="M3.5 7.8h6M6.5 2.5V1h3V0" fill="none" stroke="#777" stroke-width=".9" /></svg>
          <svg width="13" height="11" viewBox="0 0 13 11"><path d="M3.5 0 6.5 3.5h-2V8h-2V3.5h-2zM9.5 11l-3-3.5h2V3h2v4.5h2z" fill="#555" /></svg>
          <span>14:02</span>
          <svg width="11" height="11" viewBox="0 0 11 11"><path d="M3.3 1.9a4.3 4.3 0 1 0 4.4 0M5.5 .3v5" fill="none" stroke="#444" stroke-width="1.1" /></svg>
        </div>
      </div>
      <div class="vm">
        <svg width="16" height="16" viewBox="0 0 16 16"><rect x="1" y=".8" width="13" height="14.5" rx="1" fill="#67c7fa" stroke="#2c86d9" /><circle cx="8" cy="6.2" r="4.8" fill="#fff" stroke="#2270c4" stroke-width=".7" /><path d="M3 13.2Q7.5 12.5 9 8.5 9.5 5.5 7 5.5" fill="none" stroke="#0f50a0" stroke-width="2" /></svg>
        <svg width="17" height="17" viewBox="0 0 17 17"><circle cx="8.5" cy="8.5" r="7.5" fill="#cfcfcf" stroke="#b0b0b0" /><circle cx="8.5" cy="8.5" r="1.6" fill="#e4e4e4" stroke="#999" stroke-width=".8" /></svg>
        <svg width="16" height="16" viewBox="0 0 16 16"><path d="M10 3h5v9h-4v1h5v2h-6" fill="#bbb" stroke="#999" stroke-width=".8" /><path d="M10.5 5h4M10.5 7h4M10.5 9h4" stroke="#777" stroke-width=".6" /><path d="M.7 1.5 5 5l4-4.2v14L5 10.5.7 13.5z" fill="#72d2fc" stroke="#3797d8" stroke-width=".8" /></svg>
        <svg width="16" height="16" viewBox="0 0 16 16"><path d="M5 1h10v8H5z" fill="#1595f2" stroke="#d8f0ff" /><path d="M7 11h9" stroke="#888" stroke-width="1.5" /><path d="M1 6h10v7H1z" fill="#0c84e4" stroke="#fff" /><path d="M0 15h12" stroke="#777" stroke-width="1.4" /></svg>
        <svg width="16" height="16" viewBox="0 0 16 16"><path d="m10 4 3-3 2.5 2.5-3 3z" fill="#eee" stroke="#777" stroke-width=".8" /><path d="M9.5 3 13.5 7 7 13.5Q3 14 1 15.5 1.5 12 3 9.5z" fill="#64ccfb" stroke="#2f7fbe" stroke-width=".8" /></svg>
        <svg width="16" height="16" viewBox="0 0 16 16"><path d="M8 1h7.5v4H7z" fill="#2177d2" /><path d="M.5 3H7l1 1h7.5v11.5H.5z" fill="#70d4fd" stroke="#2f90d4" stroke-width=".7" /></svg>
        <svg width="16" height="16" viewBox="0 0 16 16"><path d="M1 1h14v12H1z" fill="#0b78d8" stroke="#eafaff" /><path d="M4 3.5h8v7H4z" fill="#1697f6" stroke="#fff" /><path d="M3 15h10" stroke="#777" stroke-width="1.5" /></svg>
        <svg width="16" height="16" viewBox="0 0 16 16"><path d="M1 5h11v9H1z" fill="#1286e6" stroke="#0b62b5" stroke-width=".8" /><path d="M6 1h9.5v7.5H6z" fill="#8bb1fa" stroke="#5277cc" stroke-width=".8" /><path d="M1 15.2h11" stroke="#666" /></svg>
        <svg width="16" height="16" viewBox="0 0 16 16"><path d="M1 1h10v14H1z" fill="#7e9be0" stroke="#30519f" stroke-dasharray="1.2 .8" /><path d="m3.5 4 2.5 8 2.5-8" fill="none" stroke="#fff" stroke-width="1.7" /><path d="M12 0h4v16h-4z" fill="#111" /><path d="M13 1h2v4h-2z" fill="#e22" /><path d="M13 5h2v4h-2z" fill="#fc2" /><path d="M13 9h2v6h-2z" fill="#3c3" /></svg>
        <svg width="17" height="16" viewBox="0 0 17 16"><circle cx="7.5" cy="8" r="7" fill="#7fd3fa" stroke="#3a93c8" /><path d="M7 4.5 10.5 3 15.5 8 11.5 14H7.5l3-4-3.5-1.5z" fill="#88d82a" stroke="#3f8f1a" stroke-width=".7" /></svg>
        <svg width="16" height="16" viewBox="0 0 16 16"><rect x=".7" y=".7" width="14.6" height="14.6" fill="#6bd0fb" stroke="#348fca" /><path d="M6.5 3.5h3v4.5H12l-4 4.5L4 8h2.5z" fill="#8be028" stroke="#3b8a1c" stroke-width=".8" /></svg>
        <span>Left <svg width="11" height="11" viewBox="0 0 11 11"><path d="M4 4V2.3A1.6 1.6 0 1 0 2.4 4h6.2A1.6 1.6 0 1 0 7 2.3v6.3A1.6 1.6 0 1 0 8.6 7H2.4A1.6 1.6 0 1 0 4 8.6z" fill="none" stroke="#111" stroke-width="1.1" /></svg></span>
      </div>`;
  }
}
